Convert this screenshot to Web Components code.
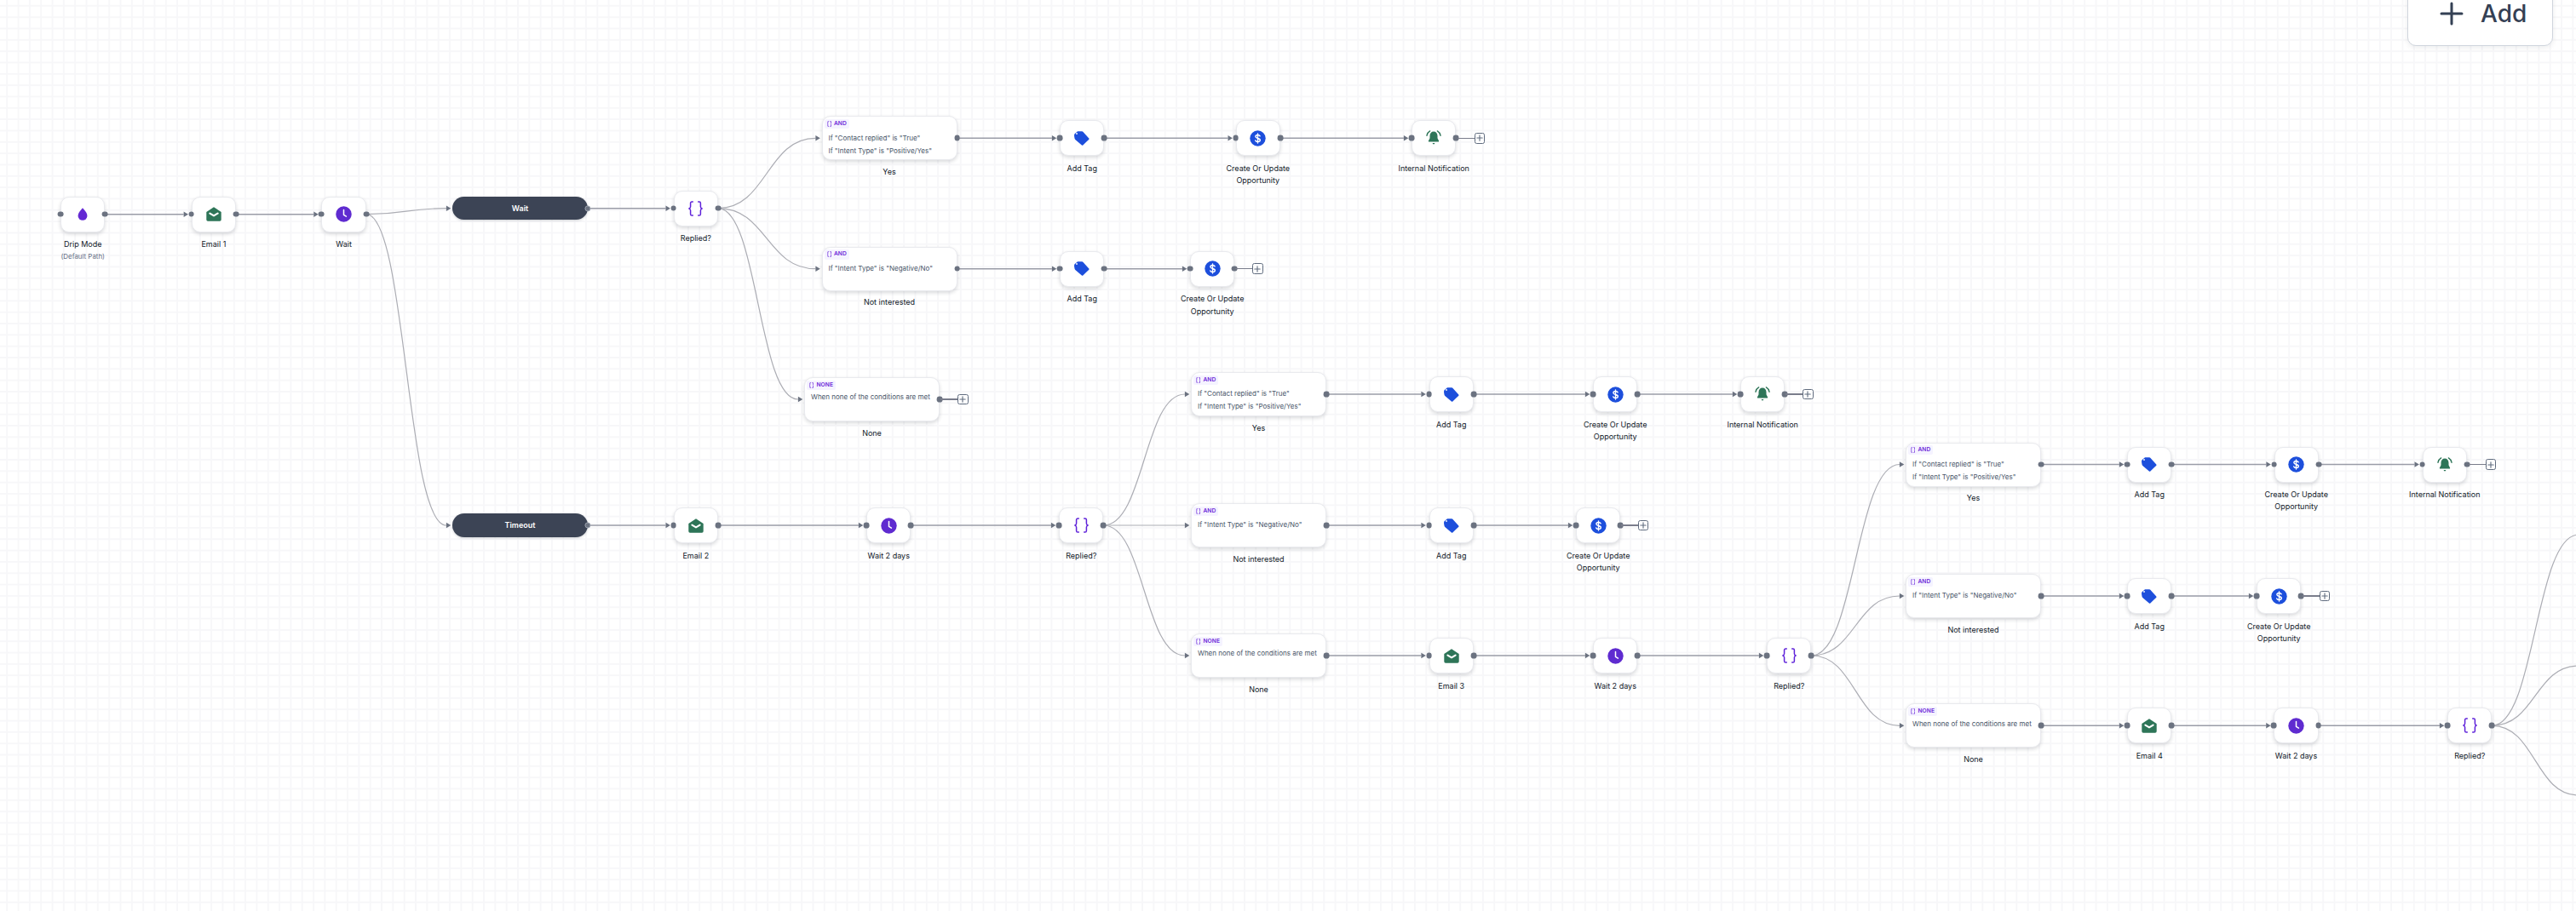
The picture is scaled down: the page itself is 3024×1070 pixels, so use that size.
<!DOCTYPE html>
<html lang="en">
<head>
<meta charset="utf-8">
<title>Workflow</title>
<style>
  html, body { margin: 0; padding: 0; background: #fff; overflow: hidden; }
  body { font-family: Inter, "Liberation Sans", sans-serif; }
</style>
</head>
<body>
<flow-canvas>
  <flow-edges edges="
    124,251.7,224.7; 276.9,251.7,377.4;
    430,251.7,533,244.7,c; 430,251.7,533,617,c;
    690,244.7,790.6; 690,617,790.6;
    843,244.7,966.5,162.3,c; 843,244.7,966.5,315.7,c; 843,244.7,946,469,c;
    1123.5,162.3,1244; 1296.4,162.3,1450.6; 1503,162.3,1657;
    1123.5,315.7,1244; 1296.4,315.7,1397;
    843,617,1017; 1069.4,617,1243;
    1295.4,617,1400,463,c; 1295.4,617,1400,617,c; 1295.4,617,1400,770,c;
    1557,463,1677.5; 1730,463,1870; 1922.4,463,2043;
    1557,617,1677.5; 1730,617,1850;
    1557,770,1677.5; 1730,770,1870; 1922.4,770,2074;
    2126.4,770,2239,545.5,c; 2126.4,770,2239,700,c; 2126.4,770,2239,852.3,c;
    2396,545.5,2497; 2549.4,545.5,2669.5; 2722,545.5,2843.6;
    2396,700,2497; 2549.4,700,2649;
    2396,852.3,2497; 2549.4,852.3,2669.3; 2721.7,852.3,2873;
    2925.4,852.3,3036,628,c; 2925.4,852.3,3036,782,c; 2925.4,852.3,3036,934,c
  "></flow-edges>

  <flow-node x="71" y="251.7" icon="drop">Drip Mode<span slot="sub">(Default Path)</span></flow-node>
  <flow-node x="224.7" y="251.7" icon="mail">Email 1</flow-node>
  <flow-node x="377.4" y="251.7" icon="clock">Wait</flow-node>
  <flow-pill x="531" y="244.7">Wait</flow-pill>
  <flow-pill x="531" y="617">Timeout</flow-pill>

  <flow-node x="790.6" y="244.7" icon="braces">Replied?</flow-node>
  <flow-card x="964.5" y="162.3" kind="AND" label="Yes"><p>If "Contact replied" is "True"</p><p>If "Intent Type" is "Positive/Yes"</p></flow-card>
  <flow-card x="964.5" y="315.7" kind="AND" label="Not interested"><p>If "Intent Type" is "Negative/No"</p></flow-card>
  <flow-card x="944" y="469" kind="NONE" label="None"><p>When none of the conditions are met</p></flow-card>
  <flow-plus x="1124" y="469"></flow-plus>

  <flow-node x="1244" y="162.3" icon="tag">Add Tag</flow-node>
  <flow-node x="1450.6" y="162.3" icon="dollar">Create Or Update Opportunity</flow-node>
  <flow-node x="1657" y="162.3" icon="bell">Internal Notification</flow-node>
  <flow-plus x="1730.6" y="162.3"></flow-plus>
  <flow-node x="1244" y="315.7" icon="tag">Add Tag</flow-node>
  <flow-node x="1397" y="315.7" icon="dollar">Create Or Update Opportunity</flow-node>
  <flow-plus x="1470" y="315.7"></flow-plus>

  <flow-node x="790.6" y="617" icon="mail">Email 2</flow-node>
  <flow-node x="1017" y="617" icon="clock">Wait 2 days</flow-node>
  <flow-node x="1243" y="617" icon="braces">Replied?</flow-node>
  <flow-card x="1398" y="463" kind="AND" label="Yes"><p>If "Contact replied" is "True"</p><p>If "Intent Type" is "Positive/Yes"</p></flow-card>
  <flow-card x="1398" y="617" kind="AND" label="Not interested"><p>If "Intent Type" is "Negative/No"</p></flow-card>
  <flow-card x="1398" y="770" kind="NONE" label="None"><p>When none of the conditions are met</p></flow-card>

  <flow-node x="1677.5" y="463" icon="tag">Add Tag</flow-node>
  <flow-node x="1870" y="463" icon="dollar">Create Or Update Opportunity</flow-node>
  <flow-node x="2043" y="463" icon="bell">Internal Notification</flow-node>
  <flow-plus x="2116" y="463"></flow-plus>
  <flow-node x="1677.5" y="617" icon="tag">Add Tag</flow-node>
  <flow-node x="1850" y="617" icon="dollar">Create Or Update Opportunity</flow-node>
  <flow-plus x="1922.5" y="617"></flow-plus>
  <flow-node x="1677.5" y="770" icon="mail">Email 3</flow-node>
  <flow-node x="1870" y="770" icon="clock">Wait 2 days</flow-node>
  <flow-node x="2074" y="770" icon="braces">Replied?</flow-node>

  <flow-card x="2237" y="545.5" kind="AND" label="Yes"><p>If "Contact replied" is "True"</p><p>If "Intent Type" is "Positive/Yes"</p></flow-card>
  <flow-card x="2237" y="700" kind="AND" label="Not interested"><p>If "Intent Type" is "Negative/No"</p></flow-card>
  <flow-card x="2237" y="852.3" kind="NONE" label="None"><p>When none of the conditions are met</p></flow-card>

  <flow-node x="2497" y="545.5" icon="tag">Add Tag</flow-node>
  <flow-node x="2669.5" y="545.5" icon="dollar">Create Or Update Opportunity</flow-node>
  <flow-node x="2843.6" y="545.5" icon="bell">Internal Notification</flow-node>
  <flow-plus x="2917.5" y="545.5"></flow-plus>
  <flow-node x="2497" y="700" icon="tag">Add Tag</flow-node>
  <flow-node x="2649" y="700" icon="dollar">Create Or Update Opportunity</flow-node>
  <flow-plus x="2722.6" y="700"></flow-plus>
  <flow-node x="2497" y="852.3" icon="mail">Email 4</flow-node>
  <flow-node x="2669.3" y="852.3" icon="clock">Wait 2 days</flow-node>
  <flow-node x="2873" y="852.3" icon="braces">Replied?</flow-node>

  <add-button>Add</add-button>
</flow-canvas>

<script>
const ICONS = {
  drop: `<svg width="12" height="15" viewBox="0 0 12 15"><path fill="#6429d3" d="M6 .3C6 .3 .6 5.6 .6 9.4A5.4 5.4 0 0 0 11.4 9.4C11.4 5.6 6 .3 6 .3Z"/></svg>`,
  mail: `<svg width="18" height="17" viewBox="0 0 18 17"><path fill="#2e7558" d="M.3 6 9 .2 17.7 6V15a1.7 1.7 0 0 1-1.7 1.7H2A1.7 1.7 0 0 1 .3 15Z"/><path fill="none" stroke="#fff" stroke-width="2.1" stroke-linecap="round" stroke-linejoin="round" d="M4.4 7.6 9 10.4 13.6 7.6"/></svg>`,
  clock: `<svg width="19" height="19" viewBox="0 0 19 19"><circle cx="9.5" cy="9.5" r="9.2" fill="#5f2bd0"/><path fill="none" stroke="#fff" stroke-width="1.5" stroke-linecap="round" stroke-linejoin="round" d="M9.5 4.4V10.4L12.4 12.2"/></svg>`,
  tag: `<svg width="18" height="17" viewBox="0 0 18 17"><path fill="#1d4fdc" d="M.5 3.2 4 .3H9.2C9.7.3 10 .5 10.3.8L17.3 8.4C17.7 8.8 17.7 9.4 17.3 9.8L10.3 16.4C9.9 16.8 9.3 16.8 8.9 16.4L1.3 10C.9 9.7.6 9.2.5 8.6L0 5.6C0 4.6.1 3.8.5 3.2Z"/><circle cx="3" cy="3" r=".9" fill="#fff"/></svg>`,
  dollar: `<svg width="19" height="19" viewBox="0 0 19 19"><circle cx="9.5" cy="9.5" r="9.2" fill="#1d4fdc"/><path fill="none" stroke="#fff" stroke-width="1.4" stroke-linecap="round" d="M12.1 6.9C11.7 6 10.7 5.5 9.5 5.5 8 5.5 6.9 6.3 6.9 7.5 6.9 10.2 12.3 8.8 12.3 11.6 12.3 12.8 11.1 13.5 9.5 13.5 8.2 13.5 7.1 13 6.7 12M9.5 3.9V15.1"/></svg>`,
  bell: `<svg width="18" height="18" viewBox="0 0 18 18"><path fill="#2e7558" d="M9 1.6C6.3 1.6 4.5 3.7 4.5 6.4V9.2L2.9 12.4C2.7 12.9 3 13.4 3.5 13.4H14.5C15 13.4 15.3 12.9 15.1 12.4L13.5 9.2V6.4C13.5 3.7 11.7 1.6 9 1.6Z"/><path fill="#2e7558" d="M7.6 15H10.4C10.2 15.9 9.7 16.4 9 16.4 8.3 16.4 7.8 15.9 7.6 15Z"/><path fill="none" stroke="#2e7558" stroke-width="1.4" stroke-linecap="round" d="M4.6 .9C2.7 2 1.4 3.8 1 6.2M13.4 .9C15.3 2 16.6 3.8 17 6.2"/></svg>`,
  braces: `<svg width="17" height="18" viewBox="0 0 17 18"><path fill="none" stroke="#5f22d9" stroke-width="1.5" stroke-linecap="round" stroke-linejoin="round" d="M5.3 1H4.2C3.2 1 2.6 1.6 2.6 2.6V6.8C2.6 7.9 1.9 8.6 .9 9 1.9 9.4 2.6 10.1 2.6 11.2V15.4C2.6 16.4 3.2 17 4.2 17H5.3M11.7 1H12.8C13.8 1 14.4 1.6 14.4 2.6V6.8C14.4 7.9 15.1 8.6 16.1 9 15.1 9.4 14.4 10.1 14.4 11.2V15.4C14.4 16.4 13.8 17 12.8 17H11.7"/></svg>`
};

function place(el) {
  el.style.left = el.getAttribute('x') + 'px';
  el.style.top = el.getAttribute('y') + 'px';
}

const HANDLE = `.h{position:absolute;width:6.8px;height:6.8px;border-radius:50%;background:#6b7280;top:50%;transform:translate(-50%,-50%);}`;

class FlowCanvas extends HTMLElement {
  constructor() {
    super();
    this.attachShadow({ mode: 'open' }).innerHTML = `<style>
      :host{display:block;position:relative;width:3024px;height:1070px;overflow:hidden;background-color:#fff;
        background-image:linear-gradient(to right,#f7f7f9 1.5px,transparent 1.5px),linear-gradient(to bottom,#f7f7f9 1.5px,transparent 1.5px);
        background-size:13.333px 13.333px;background-position:7.25px 5.9px;}
    </style><slot></slot>`;
  }
}

class FlowEdges extends HTMLElement {
  constructor() {
    super();
    this.attachShadow({ mode: 'open' });
  }
  connectedCallback() {
    const list = this.getAttribute('edges').split(';').map(s => s.trim()).filter(Boolean);
    let paths = '', arrows = '';
    for (const e of list) {
      const p = e.split(',');
      if (p[p.length - 1] === 'c') {
        const [x1, y1, x2, y2] = p.slice(0, 4).map(Number);
        const tip = x2 - 3.7, base = tip - 5.4, m = (x1 + base) / 2;
        paths += `<path stroke-width="1.2" stroke="#acadb4" d="M${x1} ${y1}C${m} ${y1} ${m} ${y2} ${base} ${y2}"/>`;
        arrows += `<path d="M${tip} ${y2}L${base} ${y2 - 3.2}V${y2 + 3.2}Z"/>`;
      } else {
        const [x1, y, x2] = p.map(Number);
        const tip = x2 - 3.7, base = tip - 5.4;
        paths += `<path stroke-width="1.5" stroke="#9a9ca7" d="M${x1} ${y}L${base} ${y}"/>`;
        arrows += `<path d="M${tip} ${y}L${base} ${y - 3.2}V${y + 3.2}Z"/>`;
      }
    }
    this.shadowRoot.innerHTML = `<style>
      :host{display:block;position:absolute;left:0;top:0;width:3024px;height:1070px;}
      svg{display:block;}
    </style><svg width="3024" height="1070" viewBox="0 0 3024 1070"><g fill="none">${paths}</g><g fill="#6b7280">${arrows}</g></svg>`;
  }
}

class FlowNode extends HTMLElement {
  constructor() {
    super();
    this.attachShadow({ mode: 'open' });
  }
  connectedCallback() {
    place(this);
    this.shadowRoot.innerHTML = `<style>
      :host{display:flex;flex-direction:column;align-items:center;position:absolute;width:52.4px;margin-top:-21px;}
      .box{position:relative;box-sizing:border-box;width:52.4px;height:42px;flex:none;background:#fff;border:1px solid #e9eaee;border-radius:10px;
        box-shadow:0 2px 4px rgba(16,24,40,.16);display:flex;align-items:center;justify-content:center;}
      svg{display:block;}
      ${HANDLE}
      .l{left:-1px}.r{left:calc(100% + 1px)}
      .label{width:100px;margin-top:7.5px;text-align:center;font:400 9px/14.4px Inter,"Liberation Sans",sans-serif;color:#101828;flex:none;}
      .sub{width:100px;text-align:center;font:400 7.9px/11px Inter,"Liberation Sans",sans-serif;color:#667085;flex:none;margin-top:1px;}
    </style>
    <div class="box">${ICONS[this.getAttribute('icon')]}<span class="h l"></span><span class="h r"></span></div>
    <div class="label"><slot></slot></div><div class="sub"><slot name="sub"></slot></div>`;
  }
}

class FlowPill extends HTMLElement {
  constructor() {
    super();
    this.attachShadow({ mode: 'open' });
  }
  connectedCallback() {
    place(this);
    this.shadowRoot.innerHTML = `<style>
      :host{display:flex;align-items:center;justify-content:center;position:absolute;box-sizing:border-box;width:159px;height:27.6px;margin-top:-13.8px;
        background:#3c4455;border-radius:14px;color:#fff;font:600 9px/14px Inter,"Liberation Sans",sans-serif;box-shadow:0 1px 3px rgba(16,24,40,.2);}
      ${HANDLE}
      .h{left:100%;border:1px solid #9ca3af;box-sizing:content-box;width:5.2px;height:5.2px;}
    </style><slot></slot><span class="h"></span>`;
  }
}

class FlowCard extends HTMLElement {
  constructor() {
    super();
    this.attachShadow({ mode: 'open' });
  }
  connectedCallback() {
    place(this);
    const pad = this.getAttribute('kind') === 'NONE' ? '1.6px' : '3.6px';
    this.shadowRoot.innerHTML = `<style>
      :host{display:flex;flex-direction:column;align-items:center;position:absolute;width:159px;margin-top:-26px;}
      .card{position:relative;box-sizing:border-box;width:159px;height:52px;background:#fff;border:1px solid #e9eaee;border-radius:10px;
        box-shadow:0 2px 4px rgba(16,24,40,.16);padding:2.5px 2px;display:flex;flex-direction:column;align-items:flex-start;}
      .chip{display:inline-flex;align-items:center;gap:3px;height:11.4px;padding:0 3px;background:#f5f3ff;border-radius:2px;
        font:600 6.7px/11px Inter,"Liberation Sans",sans-serif;color:#6d28d9;letter-spacing:.1px;}
      .chip svg{display:block;}
      .lines{padding:${pad} 0 0 5px;font:400 8px/15px Inter,"Liberation Sans",sans-serif;color:#475467;white-space:nowrap;}
      ::slotted(p){margin:0;}
      ${HANDLE}
      .h{left:calc(100% + 1px);}
      .label{margin-top:6.5px;font:400 9px/14px Inter,"Liberation Sans",sans-serif;color:#101828;}
    </style>
    <div class="card"><span class="chip"><svg width="5.4" height="7" viewBox="0 0 17 18" preserveAspectRatio="none"><path fill="none" stroke="#6d28d9" stroke-width="2.2" stroke-linecap="round" stroke-linejoin="round" d="M5.3 1H4.2C3.2 1 2.6 1.6 2.6 2.6V6.8C2.6 7.9 1.9 8.6 .9 9 1.9 9.4 2.6 10.1 2.6 11.2V15.4C2.6 16.4 3.2 17 4.2 17H5.3M11.7 1H12.8C13.8 1 14.4 1.6 14.4 2.6V6.8C14.4 7.9 15.1 8.6 16.1 9 15.1 9.4 14.4 10.1 14.4 11.2V15.4C14.4 16.4 13.8 17 12.8 17H11.7"/></svg>${this.getAttribute('kind')}</span>
    <div class="lines"><slot></slot></div><span class="h"></span></div>
    <div class="label">${this.getAttribute('label')}</div>`;
  }
}

class FlowPlus extends HTMLElement {
  constructor() {
    super();
    this.attachShadow({ mode: 'open' });
  }
  connectedCallback() {
    place(this);
    this.shadowRoot.innerHTML = `<style>
      :host{display:flex;align-items:center;justify-content:center;position:absolute;box-sizing:border-box;width:12.6px;height:12.6px;margin-top:-6.3px;
        background:#fff;border:1.3px solid #5f6b7e;border-radius:2.5px;}
      svg{display:block;}
      .stub{position:absolute;right:100%;top:50%;height:1.5px;width:20px;margin-top:-.75px;margin-right:.6px;background:#7a7d8b;}
    </style><span class="stub"></span><svg width="8" height="8" viewBox="0 0 8 8"><path fill="none" stroke="#5f6b7e" stroke-width="1.1" stroke-linecap="round" d="M4 .8V7.2M.8 4H7.2"/></svg>`;
  }
}

class AddButton extends HTMLElement {
  constructor() {
    super();
    this.attachShadow({ mode: 'open' }).innerHTML = `<style>
      :host{display:flex;align-items:center;position:absolute;left:2826px;top:-22px;box-sizing:border-box;width:171px;height:76.4px;padding-left:37px;gap:20px;
        background:#fff;border:1.5px solid #d0d5dd;border-radius:10px;box-shadow:0 2px 6px rgba(16,24,40,.08);
        font:500 28px/34px Inter,"Liberation Sans",sans-serif;color:#344054;}
      svg{display:block;flex:none;}
    </style><svg width="28" height="28" viewBox="0 0 28 28"><path fill="none" stroke="#344054" stroke-width="3" stroke-linecap="round" d="M14 2V26M2 14H26"/></svg><slot></slot>`;
  }
}

customElements.define('flow-canvas', FlowCanvas);
customElements.define('flow-edges', FlowEdges);
customElements.define('flow-node', FlowNode);
customElements.define('flow-pill', FlowPill);
customElements.define('flow-card', FlowCard);
customElements.define('flow-plus', FlowPlus);
customElements.define('add-button', AddButton);
</script>
</body>
</html>
